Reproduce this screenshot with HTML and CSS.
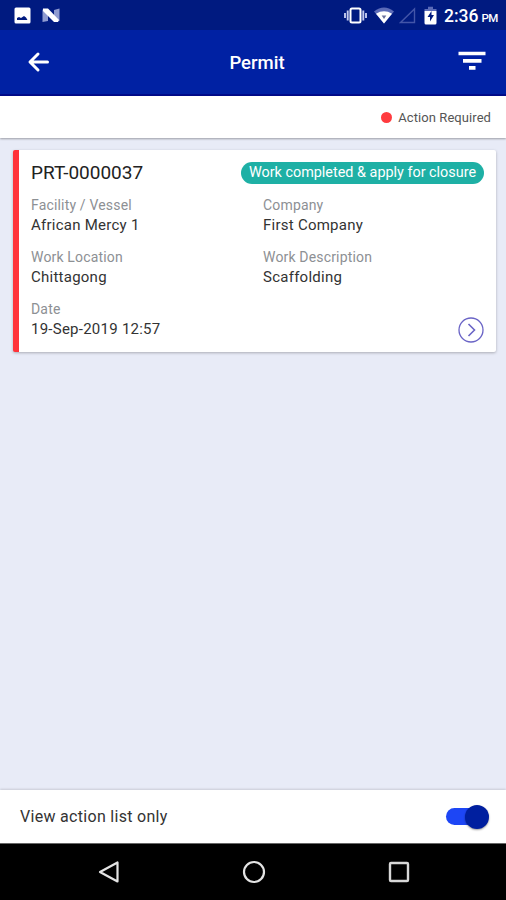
FILE: index.html
```html
<!DOCTYPE html>
<html lang="en">
<head>
<meta charset="utf-8">
<title>Permit</title>
<link rel="stylesheet" href="styles.css">
</head>
<body>
<div class="screen">
  <div class="status">
    <div class="status-left">
      <svg width="17" height="17" viewBox="0 0 17 17"><rect x=".5" y=".5" width="16" height="16" rx="1.500" fill="#fff"/><path d="M3 13v-2l2-1 2 1 3-2 2 1.500 1.500 2.500z" fill="#001a80"/></svg>
      <svg width="18" height="15" viewBox="0 0 18 15"><path d="M.5 1.500L6 4v9L.5 14zM12 2l5.500-1.500V13L12 11z" fill="#8f9bd0"/><path d="M1 .5h5L17 12l-1 2h-4L1 3z" fill="#fff"/></svg>
    </div>
    <div class="status-right">
      <svg width="23" height="17" viewBox="0 0 23 17"><rect x="6.500" y="1.500" width="10" height="14" rx="1.500" fill="none" stroke="#fff" stroke-width="2"/><path d="M3.700 3.500v10M19.300 3.500v10M1 6v5M22 6v5" stroke="#c3cbee" stroke-width="1.900"/></svg>
      <svg class="wifi" width="20" height="17" viewBox="0 0 20 17"><path d="M0 4.500Q10-3.500 20 4.500L10 16.500z" fill="#5b6bb8"/><path d="M2 6.700Q10 2 18 6.700L10 16.500z" fill="#fff"/><path d="M7.700 8.500h4.600L10 12z" fill="#68709c"/></svg>
      <svg class="signal" width="17" height="17" viewBox="0 0 17 17"><path d="M1.500 15.500H15.500V2z" fill="none" stroke="#4355a8" stroke-width="1.400"/></svg>
      <svg class="battery" width="13" height="19" viewBox="0 0 13 19"><path d="M.5 5V3H4V.8h5V3h3.500v2z" fill="#5b6bb8"/><path d="M.5 5h12v12q0 1.500-1.500 1.500H2Q.5 18.500.5 17z" fill="#fff"/><path d="M7.500 5L3.500 11H6v4.500l4-6.500H7.500z" fill="#001a80"/></svg>
      <span class="clock">2:36</span><span class="pm">PM</span>
    </div>
  </div>
  <header class="bar">
    <svg class="back" width="24" height="22" viewBox="0 0 24 22"><path d="M12 3L4 11l8 8M4.500 11H21.500" fill="none" stroke="#fff" stroke-width="3" stroke-linecap="round" stroke-linejoin="round"/></svg>
    <h1>Permit</h1>
    <svg width="28" height="19" viewBox="0 0 28 19"><path d="M.5 2.500h27M5 9.800h18.500M11 16.800h6.500" stroke="#fff" stroke-width="3.700"/></svg>
  </header>
  <div class="legend"><i class="dot"></i><span>Action Required</span></div>
  <main>
    <article class="card">
      <div class="card-head"><h2>PRT-0000037</h2><span class="badge">Work completed &amp; apply for closure</span></div>
      <dl>
        <div><dt>Facility / Vessel</dt><dd>African Mercy 1</dd></div>
        <div><dt>Company</dt><dd>First Company</dd></div>
        <div><dt>Work Location</dt><dd>Chittagong</dd></div>
        <div><dt>Work Description</dt><dd>Scaffolding</dd></div>
        <div><dt>Date</dt><dd>19-Sep-2019 12:57</dd></div>
        <svg class="go" width="26" height="26" viewBox="0 0 26 26"><circle cx="13" cy="13" r="12" fill="none" stroke="#6a64c6" stroke-width="1.300"/><path d="M10.500 7l6 6-6 6" fill="none" stroke="#6a64c6" stroke-width="1.600"/></svg>
      </dl>
    </article>
  </main>
  <div class="filter">
    <span>View action list only</span>
    <span class="switch"><i></i></span>
  </div>
  <nav>
    <svg width="22" height="24" viewBox="0 0 22 24"><path d="M19.500 2.500v19L2 12z" fill="none" stroke="#e4e4e4" stroke-width="2.200" stroke-linejoin="round"/></svg>
    <svg width="24" height="24" viewBox="0 0 24 24"><circle cx="12" cy="12" r="10" fill="none" stroke="#e4e4e4" stroke-width="2.200"/></svg>
    <svg width="22" height="22" viewBox="0 0 22 22"><rect x="2" y="2" width="18" height="18" rx="1" fill="none" stroke="#d8d8d8" stroke-width="2.400"/></svg>
  </nav>
</div>
</body>
</html>
```

FILE: styles.css
```css
* { box-sizing: border-box; }
body { margin: 0; font-family: Roboto, sans-serif; color: #333; }
h1, h2, dl, dd { margin: 0; }
svg { display: block; flex: none; }
.screen { width: 506px; height: 900px; display: flex; flex-direction: column; background: #e8ebf7; overflow: hidden; }
.status { height: 30px; background: #001a80; display: flex; justify-content: space-between; padding: 0 8px 0 14px; flex: none; }
.status-left, .status-right { display: flex; align-items: center; color: #fff; }
.status-left { gap: 11px; }
.wifi { margin-left: 7px; }
.signal { margin-left: 5px; }
.battery { margin-left: 8px; }
.clock { font-size: 17.5px; font-weight: 500; line-height: 30px; margin: 2px 0 0 7px; }
.pm { font-size: 11.500px; font-weight: 500; letter-spacing: -.4px; margin: 5px 0 0 3px; }
.bar { height: 66px; flex: none; background: #0021a3; border-bottom: 2px solid #000b8a; display: flex; align-items: center; justify-content: space-between; padding: 0 20px 0 26px; color: #fff; }
.bar h1 { font-size: 18.500px; font-weight: 500; line-height: 24px; margin: 1px 0 0 6px; }
.bar > svg:last-child { margin-top: -4px; }
.legend { height: 42px; flex: none; background: #fff; display: flex; align-items: center; justify-content: flex-end; padding: 1px 15px 0 0; font-size: 13px; letter-spacing: .07px; color: #555; box-shadow: 0 1px 2px #0005; }
.dot { width: 11px; height: 11px; border-radius: 50%; background: #ff3b3f; margin-right: 6px; }
main { flex: 1; padding: 12px 10px 0 13px; }
.card { height: 202px; background: #fff; border-left: 6px solid #ff3239; border-radius: 2px; box-shadow: 0 1px 3px #0004; padding: 10px 12px 0; }
.card-head { display: flex; justify-content: space-between; align-items: center; height: 26px; }
h2 { font-size: 19px; font-weight: 400; line-height: 24px; color: #222; }
.badge { width: 243px; height: 22px; border-radius: 11px; background: #1eb0a5; color: #fff; font-size: 14.400px; line-height: 22px; text-align: center; white-space: nowrap; }
dl { display: grid; grid-template-columns: 232px 1fr; grid-auto-rows: 52px; padding-top: 10px; }
dt { font-size: 14px; letter-spacing: .17px; line-height: 19px; color: #8d9094; }
dd { font-size: 15px; letter-spacing: .25px; line-height: 20px; color: #333; }
dt, dd { white-space: nowrap; }
.go { justify-self: end; margin-top: 17px; }
.filter { height: 53px; flex: none; background: #fff; display: flex; align-items: center; justify-content: space-between; padding: 0 17px 0 20px; font-size: 16px; letter-spacing: .3px; box-shadow: 0 -1px 2px #0002; }
.switch { width: 43px; height: 25px; display: flex; align-items: center; justify-content: flex-end; position: relative; }
.switch::before { content: ""; position: absolute; left: 0; top: 4px; width: 36px; height: 17px; border-radius: 9px; background: #1d46f5; }
.switch i { position: relative; width: 24px; height: 24px; border-radius: 50%; background: #001f9f; box-shadow: 0 1px 2px #0006; }
nav { height: 57px; flex: none; background: #000; border-top: 1px solid #666; display: flex; align-items: center; justify-content: space-between; padding: 0 96px 0 98px; }
```
